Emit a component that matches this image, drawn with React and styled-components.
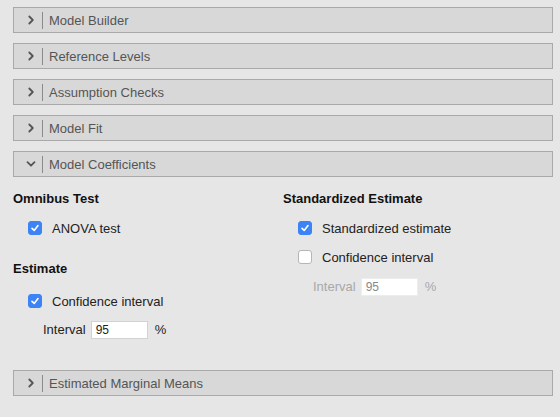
import styled, { createGlobalStyle } from "styled-components";

const GlobalStyle = createGlobalStyle`
  html, body {
    margin: 0;
    padding: 0;
    background: #e6e6e6;
    font-family: "Liberation Sans", Arial, sans-serif;
  }
`;

const Page = styled.div`
  width: 560px;
  height: 417px;
  padding: 7px 7px 0 13px;
  box-sizing: border-box;
  display: flex;
  flex-direction: column;
  gap: 10px;
`;

const Header = styled.div`
  width: 540px;
  height: 26px;
  box-sizing: border-box;
  background: #d8d8d8;
  border: 1px solid #a9a9a9;
  display: flex;
  align-items: center;
  padding-left: 12px;
  flex-shrink: 0;
`;

const Chevron = styled.span`
  width: 10px;
  display: flex;
  justify-content: center;
  align-items: center;
`;

const Divider = styled.span`
  width: 1px;
  height: 17px;
  background: #8a8a8a;
  margin-left: 6px;
  margin-right: 6px;
`;

const HeaderLabel = styled.span`
  font-size: 13px;
  color: #555;
`;

const Content = styled.div`
  display: grid;
  grid-template-columns: 270px 270px;
  margin-top: 4px;
  margin-bottom: 21px;
`;

const Column = styled.div`
  display: flex;
  flex-direction: column;
`;

const Title = styled.div`
  font-size: 13px;
  font-weight: bold;
  color: #111;
  line-height: 16px;
  margin-top: ${(p) => p.$top || 0}px;
`;

const CheckRow = styled.label`
  display: flex;
  align-items: center;
  height: 20px;
  padding-left: 15px;
  gap: 10px;
  font-size: 13px;
  color: #222;
  margin-top: ${(p) => p.$top || 0}px;
`;

const Box = styled.span`
  width: 14px;
  height: 14px;
  box-sizing: border-box;
  border-radius: 3px;
  display: flex;
  align-items: center;
  justify-content: center;
  background: ${(p) => (p.$checked ? "#3c83f6" : "#ffffff")};
  border: 1px solid ${(p) => (p.$checked ? "#3c83f6" : "#b5b5b5")};
`;

const IntervalRow = styled.div`
  display: flex;
  align-items: center;
  height: 19px;
  padding-left: 30px;
  font-size: 13px;
  color: ${(p) => (p.$disabled ? "#a8a8a8" : "#222")};
  margin-top: ${(p) => p.$top || 0}px;
`;

const Field = styled.span`
  width: 57px;
  height: 18px;
  box-sizing: border-box;
  margin-left: 5px;
  margin-right: 7px;
  background: #fff;
  border: 1px solid ${(p) => (p.$disabled ? "#ededed" : "#d2d2d2")};
  font-size: 12px;
  color: ${(p) => (p.$disabled ? "#888" : "#222")};
  display: flex;
  align-items: center;
  padding-left: 4px;
`;

const ChevronIcon = ({ open }) => (
  <svg width="10" height="10" viewBox="0 0 10 10">
    <path
      d={open ? "M1.5 3.2 L5 6.7 L8.5 3.2" : "M3.3 1.5 L6.8 5 L3.3 8.5"}
      fill="none"
      stroke="#555"
      strokeWidth="1.8"
      strokeLinecap="round"
      strokeLinejoin="round"
    />
  </svg>
);

const Section = ({ title, open }) => (
  <Header>
    <Chevron>
      <ChevronIcon open={open} />
    </Chevron>
    <Divider />
    <HeaderLabel>{title}</HeaderLabel>
  </Header>
);

const Check = ({ checked, label, top }) => (
  <CheckRow $top={top}>
    <Box $checked={checked}>
      {checked && (
        <svg width="10" height="10" viewBox="0 0 10 10">
          <path
            d="M2 5.3 L4.2 7.4 L8 2.6"
            fill="none"
            stroke="#fff"
            strokeWidth="1.6"
            strokeLinecap="round"
            strokeLinejoin="round"
          />
        </svg>
      )}
    </Box>
    {label}
  </CheckRow>
);

const Interval = ({ disabled, top }) => (
  <IntervalRow $disabled={disabled} $top={top}>
    Interval
    <Field $disabled={disabled}>95</Field>%
  </IntervalRow>
);

export default function App() {
  return (
    <>
      <GlobalStyle />
      <Page>
        <Section title="Model Builder" />
        <Section title="Reference Levels" />
        <Section title="Assumption Checks" />
        <Section title="Model Fit" />
        <Section title="Model Coefficients" open />
        <Content>
          <Column>
            <Title>Omnibus Test</Title>
            <Check checked label="ANOVA test" top={11} />
            <Title $top={23}>Estimate</Title>
            <Check checked label="Confidence interval" top={14} />
            <Interval top={9} />
          </Column>
          <Column>
            <Title>Standardized Estimate</Title>
            <Check checked label="Standardized estimate" top={11} />
            <Check label="Confidence interval" top={9} />
            <Interval disabled top={10} />
          </Column>
        </Content>
        <Section title="Estimated Marginal Means" />
      </Page>
    </>
  );
}
